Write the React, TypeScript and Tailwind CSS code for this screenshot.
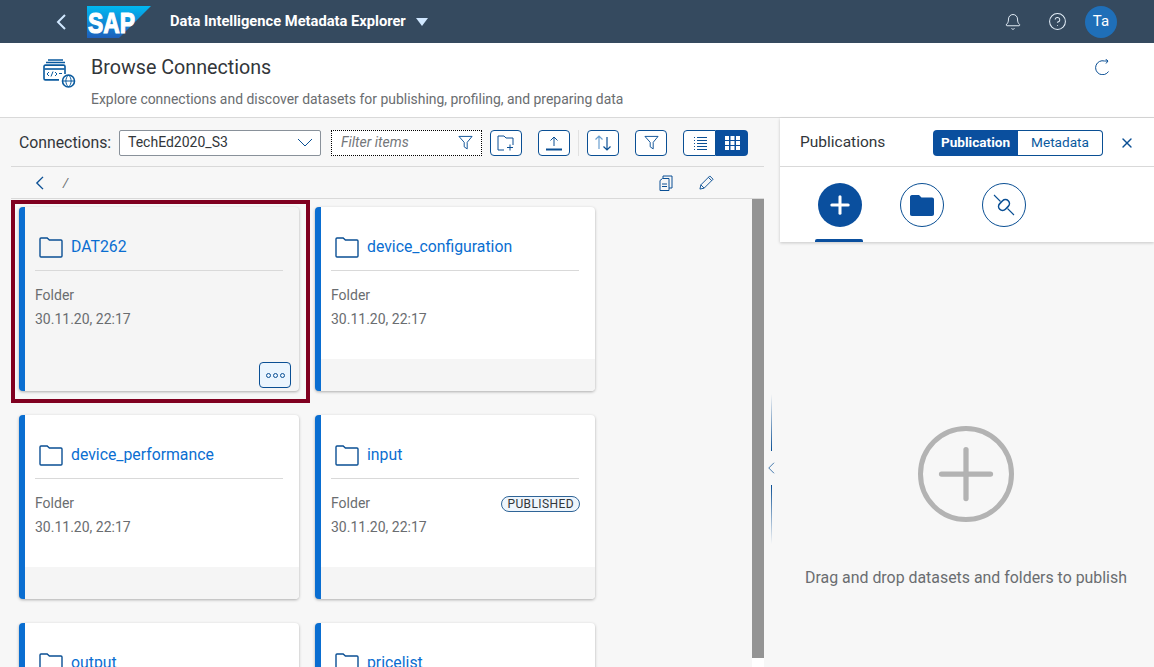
import { Bell, CircleHelp, Plus, X } from "lucide-react";

const font = "font-['Roboto','Liberation_Sans',sans-serif]";

function Chevron({ className, width = 1.6 }: { className?: string; width?: number }) {
    return (
        <svg viewBox="0 0 10 16" className={className} fill="none" stroke="currentColor" strokeWidth={width}>
            <path d="M9 1 2 8l7 7" />
        </svg>
    );
}

function FolderIcon({ className }: { className?: string }) {
    return (
        <svg viewBox="0 0 24 21" className={className} fill="none" stroke="#0a4f94" strokeWidth="1.400">
            <path d="M1 2c0-.6.4-1 1-1h6.200l2.200 2h11.600c.6 0 1 .4 1 1v15c0 .6-.4 1-1 1H2c-.6 0-1-.4-1-1z" />
        </svg>
    );
}

function FilterIcon({ className }: { className?: string }) {
    return (
        <svg viewBox="0 0 16 16" className={className} fill="none" stroke="#0a4f94" strokeWidth="1">
            <path d="M1 1.500h14L9.800 7.800v7L6.600 12.600V7.800z" />
        </svg>
    );
}

function ToolButton({ children }: { children: React.ReactNode }) {
    return (
        <button className="flex h-[26px] w-8 items-center justify-center rounded-[4px] border border-[#0a4f94] bg-white">
            {children}
        </button>
    );
}

function Card({ name, published, active }: { name: string; published?: boolean; active?: boolean }) {
    return (
        <div
            className={`flex h-[184px] w-[280px] flex-col overflow-hidden rounded-[4px] border-l-[6px] border-[#0a6ed1] shadow-[0_1px_3px_rgba(0,0,0,0.3)] ${
                active ? "bg-[#f5f5f5]" : "bg-white"
            }`}
        >
            <div className="ml-[10px] mr-[16px] flex h-[64px] shrink-0 items-end gap-2 border-b border-[#d9d9d9] pb-[12px] pl-1">
                <FolderIcon className="h-[21px] w-6 shrink-0" />
                <span className="-translate-y-px text-[15.800px] leading-[21px] text-[#0a6ed1]">{name}</span>
            </div>
            <div className="relative flex-1 px-[10px] pt-[12px] text-[14px] leading-[24px] text-[#6a6d70]">
                <div>Folder</div>
                <div>30.11.20, 22:17</div>
                {published && (
                    <span className="absolute right-[15px] top-[17px] rounded-full border border-[#2f6497] bg-[#eef5fc] px-[5px] text-[12px] leading-[14px] tracking-[0.4px] text-[#32363a]">
                        PUBLISHED
                    </span>
                )}
            </div>
            <div className={`relative h-[32px] shrink-0 ${active ? "" : "bg-[#f5f5f5]"}`}>
                {active && (
                    <button className="absolute right-[8px] top-[3px] flex h-[26px] w-8 items-center justify-center gap-[2px] rounded-[4px] border border-[#0a4f94] bg-[#ebf5fe]">
                        <i className="size-[5px] rounded-full border border-[#0a4f94]" />
                        <i className="size-[5px] rounded-full border border-[#0a4f94]" />
                        <i className="size-[5px] rounded-full border border-[#0a4f94]" />
                    </button>
                )}
            </div>
        </div>
    );
}

export default function App() {
    return (
        <div className={`flex h-[667px] w-[1154px] flex-col overflow-hidden bg-[#f7f7f7] ${font}`}>
            {/* shell bar */}
            <header className="flex h-[43px] shrink-0 items-center bg-[#354a5f] pr-[37px] text-white">
                <Chevron className="ml-[56px] h-[16px] w-[10px] text-[#d1e8ff]" width={2} />
                <svg viewBox="0 0 64 32" className="ml-[21px] h-8 w-16">
                    <defs>
                        <linearGradient id="sap" x1="0" y1="0" x2="0" y2="1">
                            <stop offset="0" stopColor="#00b8f1" />
                            <stop offset="1" stopColor="#1e5fbb" />
                        </linearGradient>
                    </defs>
                    <polygon points="0,0 64,0 32,32 0,32" fill="url(#sap)" />
                    <text x="1" y="27" fill="#fff" stroke="#fff" strokeWidth="1.200" fontSize="29" fontWeight="700" textLength="47" lengthAdjust="spacingAndGlyphs" fontFamily="Liberation Sans">
                        SAP
                    </text>
                </svg>
                <span className="ml-[19px] text-[14.700px] font-bold">Data Intelligence Metadata Explorer</span>
                <svg viewBox="0 0 12 8" className="ml-[10px] h-2 w-3">
                    <path d="M0 0h12L6 8z" fill="#d1e8ff" />
                </svg>
                <div className="ml-auto flex items-center">
                    <Bell className="size-[18px] text-[#e3eef8]" strokeWidth={1.300} />
                    <CircleHelp className="ml-[26px] size-[19px] text-[#e3eef8]" strokeWidth={1.300} />
                    <div className="ml-[18px] flex size-8 items-center justify-center rounded-full bg-[#1f6fb8] text-[15px]">Ta</div>
                </div>
            </header>

            {/* page title */}
            <div className="flex h-[75px] shrink-0 border-b border-[#d9d9d9] bg-white pl-[43px] pr-[43px]">
                <svg viewBox="0 0 33 29" className="mt-[16px] h-[29px] w-[33px]" fill="none" stroke="#0a5a9e" strokeWidth="1.600">
                    <path d="M5 1h15M3 3.500h19" />
                    <path d="M22 15V7.500c0-.8-.6-1.400-1.400-1.400H2.400C1.600 6.100 1 6.700 1 7.500v12c0 .8.600 1.400 1.400 1.400H16" />
                    <path d="M1.500 10h20" />
                    <path d="M6 13l-2 2 2 2M12 13l2 2-2 2M10 12.500l-2 5M16 14.500h3" strokeWidth="1" />
                    <circle cx="25.500" cy="22" r="6" fill="#fff" />
                    <path d="M19.500 22h12M25.500 16c-3.500 3-3.500 9 0 12M25.500 16c3.500 3 3.500 9 0 12" strokeWidth="1" />
                </svg>
                <div className="ml-[15px] flex-1">
                    <h1 className="mt-[11px] text-[19.700px] leading-[28px] text-[#32363a]">Browse Connections</h1>
                    <p className="mt-[8px] text-[13.930px] leading-[18px] text-[#6a6d70]">
                        Explore connections and discover datasets for publishing, profiling, and preparing data
                    </p>
                </div>
                <svg viewBox="0 0 16 16" className="mt-[16px] size-[16px]" fill="none" stroke="#0a4f94" strokeWidth="1">
                    <path d="M13.500 12.500A7 7 0 1 1 9.500 2H13M10.500 0 13 2l-2 2.500" />
                </svg>
            </div>

            <div className="flex min-h-0 flex-1">
                {/* left column */}
                <div className="flex w-[764px] shrink-0 flex-col pl-[11px]">
                    <div className="flex h-[49px] shrink-0 items-center border-b border-[#d9d9d9] pl-2 pt-[1px]">
                        <span className="w-[100px] text-[15.800px] text-[#32363a]">Connections:</span>
                        <div className="flex h-[26px] w-[202px] items-center justify-between rounded-[2px] border border-[#89919a] bg-white pl-[8px] pr-[7px] text-[14px] text-[#32363a]">
                            TechEd2020_S3
                            <svg viewBox="0 0 16 9" className="h-[9px] w-4" fill="none" stroke="#0a4f94" strokeWidth="1">
                                <path d="M1 1l7 7 7-7" />
                            </svg>
                        </div>
                        <div className="ml-[10px] flex h-[26px] w-[151px] items-center justify-between border border-dotted border-black bg-white pl-[9px] pr-[8px] text-[14px] italic text-[#74777a]">
                            Filter items
                            <FilterIcon className="size-[15px]" />
                        </div>
                        <div className="ml-[8px]">
                            <ToolButton>
                                <svg viewBox="0 0 18 16" className="h-4 w-[18px]" fill="none" stroke="#0a4f94" strokeWidth="1">
                                    <path d="M7 15H1V1h6l2 2h7v7M10 12.500h6M13 9.500v6" />
                                </svg>
                            </ToolButton>
                        </div>
                        <div className="ml-4">
                            <ToolButton>
                                <svg viewBox="0 0 18 16" className="h-4 w-[18px]" fill="none" stroke="#0a4f94" strokeWidth="1">
                                    <path d="M9 11V2M5.500 5.500 9 2l3.500 3.500" />
                                    <path d="M1 14.500h16" strokeWidth="2" />
                                </svg>
                            </ToolButton>
                        </div>
                        <div className="ml-2 h-[26px] w-px bg-[#e1e1e1]" />
                        <div className="ml-2">
                            <ToolButton>
                                <svg viewBox="0 0 18 16" className="h-4 w-[18px]" fill="none" strokeWidth="1.200">
                                    <path d="M5 14V1M1.500 4.500 5 1l3.500 3.500" stroke="#6a9fd0" />
                                    <path d="M13 2v13M9.500 11.500 13 15l3.500-3.500" stroke="#0a4f94" />
                                </svg>
                            </ToolButton>
                        </div>
                        <div className="ml-4">
                            <ToolButton>
                                <FilterIcon className="size-[15px]" />
                            </ToolButton>
                        </div>
                        <div className="ml-4 flex h-[26px]">
                            <button className="flex w-[33px] items-center justify-center rounded-l-[4px] border border-[#0a4f94] bg-white">
                                <svg viewBox="0 0 14 14" className="size-[14px]" stroke="#0a4f94" strokeWidth="1">
                                    <path d="M1 1.500h1M4 1.500h10M1 4.500h1M4 4.500h10M1 7.500h1M4 7.500h10M1 10.500h1M4 10.500h10M1 13.500h1M4 13.500h10" />
                                </svg>
                            </button>
                            <button className="flex w-8 items-center justify-center rounded-r-[4px] bg-[#0a4f9e]">
                                <svg viewBox="0 0 15 14" className="h-[14px] w-[15px]" fill="#fff">
                                    <path d="M0 0h4v4H0zM5.500 0h4v4h-4zM11 0h4v4h-4zM0 5h4v4H0zM5.500 5h4v4h-4zM11 5h4v4h-4zM0 10h4v4H0zM5.500 10h4v4h-4zM11 10h4v4h-4z" />
                                </svg>
                            </button>
                        </div>
                    </div>
                    <div className="flex h-[32px] shrink-0 items-center border-b border-[#d9d9d9]">
                        <Chevron className="ml-[24px] h-[14px] w-[9px] text-[#0a4f94]" />
                        <span className="ml-[19px] text-[13px] italic text-[#6a6d70]">/</span>
                        <svg viewBox="0 0 14 16" className="ml-auto mr-[26px] h-4 w-[14px]" fill="none" stroke="#0a4f94" strokeWidth="1">
                            <path d="M1 5.500 3.500 3.500H10v12H1zM4 3V1h9v12h-3M3 9h5M3 11.500h5" />
                        </svg>
                        <svg viewBox="0 0 16 16" className="mr-[50px] size-[15px]" fill="none" stroke="#0a4f94" strokeWidth="1">
                            <path d="M1 15l1-4.500L11.500 1 15 4.500 5.500 14zM2 10.500 5.500 14M10 2.500l3.500 3.500" />
                        </svg>
                    </div>
                    <div className="relative flex min-h-0 flex-1">
                        <div className="grid flex-1 grid-cols-[280px_280px] content-start gap-x-[16px] gap-y-[24px] overflow-hidden pl-[8px] pt-[8px]">
                            <Card name="DAT262" active />
                            <Card name="device_configuration" />
                            <Card name="device_performance" />
                            <Card name="input" published />
                            <Card name="output" />
                            <Card name="pricelist" />
                        </div>
                        <div className="flex w-3 shrink-0 flex-col">
                            <div className="flex-1 bg-[#949494]" />
                            <div className="h-[9px] bg-white" />
                        </div>
                        <div className="pointer-events-none absolute left-0 top-[1px] h-[203px] w-[299px] border-[4px] border-[#800020]" />
                    </div>
                </div>

                {/* splitter */}
                <div className="flex w-4 shrink-0 flex-col items-center pr-[2px] pt-[276px]">
                    <div className="h-[57px] w-px bg-gradient-to-b from-transparent to-[#0a4f94]" />
                    <Chevron className="my-[11px] -ml-[1px] h-[12px] w-[8px] text-[#0a4f94]" width={1} />
                    <div className="h-[59px] w-px bg-gradient-to-b from-[#0a4f94] to-transparent" />
                </div>

                {/* right column */}
                <aside className="flex min-w-0 flex-1 flex-col">
                    <div className="bg-white shadow-[0_1px_3px_rgba(0,0,0,0.2)]">
                        <div className="flex h-[49px] items-center border-b border-[#d9d9d9] pl-5 pr-[19px] pt-[1px]">
                            <span className="text-[15.500px] text-[#32363a]">Publications</span>
                            <div className="ml-auto flex h-[26px] text-[13.600px]">
                                <span className="flex w-[85px] items-center justify-center rounded-l-[4px] bg-[#0a4f9e] font-bold text-white">Publication</span>
                                <span className="flex w-[85px] items-center justify-center rounded-r-[4px] border border-l-0 border-[#0a4f94] text-[#0a5a9e]">Metadata</span>
                            </div>
                            <X className="ml-[16px] size-[16px] text-[#0a4f94]" strokeWidth={2} />
                        </div>
                        <div className="flex h-[75px] gap-[38px] pl-[38px] pt-[16px]">
                            <div className="relative flex size-[44px] items-center justify-center rounded-full bg-[#0a4f9e]">
                                <Plus className="size-[28px] text-white" strokeWidth={2.600} />
                                <div className="absolute -left-[3px] top-[56px] h-[3px] w-12 rounded-t-[2px] bg-[#0a4f9e]" />
                            </div>
                            <div className="flex size-[44px] items-center justify-center rounded-full border border-[#0a4f94]">
                                <svg viewBox="0 0 24 21" className="h-[21px] w-6" fill="#0a4f9e">
                                    <path d="M0 2c0-1 .6-2 2-2h7l2.500 2.500H22c1.200 0 2 .8 2 2V19c0 1.200-.8 2-2 2H2c-1.400 0-2-.8-2-2z" />
                                </svg>
                            </div>
                            <div className="flex size-[44px] items-center justify-center rounded-full border border-[#0a4f94]">
                                <svg viewBox="0 0 24 24" className="size-6" fill="none" stroke="#0a4f94" strokeWidth="1.100">
                                    <path d="M2 2l6.500 6.500M15.500 15.500 22 22" />
                                    <rect x="6" y="8" width="12" height="8" rx="4" strokeWidth="1.600" transform="rotate(-45 12 12)" />
                                </svg>
                            </div>
                        </div>
                    </div>
                    <div className="flex flex-1 flex-col items-center pr-[2px] pt-[184px]">
                        <div className="flex size-[96px] items-center justify-center rounded-full border-[5px] border-[#b3b3b3]">
                            <Plus className="size-[84px] shrink-0 text-[#b3b3b3]" strokeWidth={1.500} />
                        </div>
                        <p className="mt-[44px] text-[15.900px] text-[#6a6d70]">Drag and drop datasets and folders to publish</p>
                    </div>
                </aside>
            </div>
        </div>
    );
}
